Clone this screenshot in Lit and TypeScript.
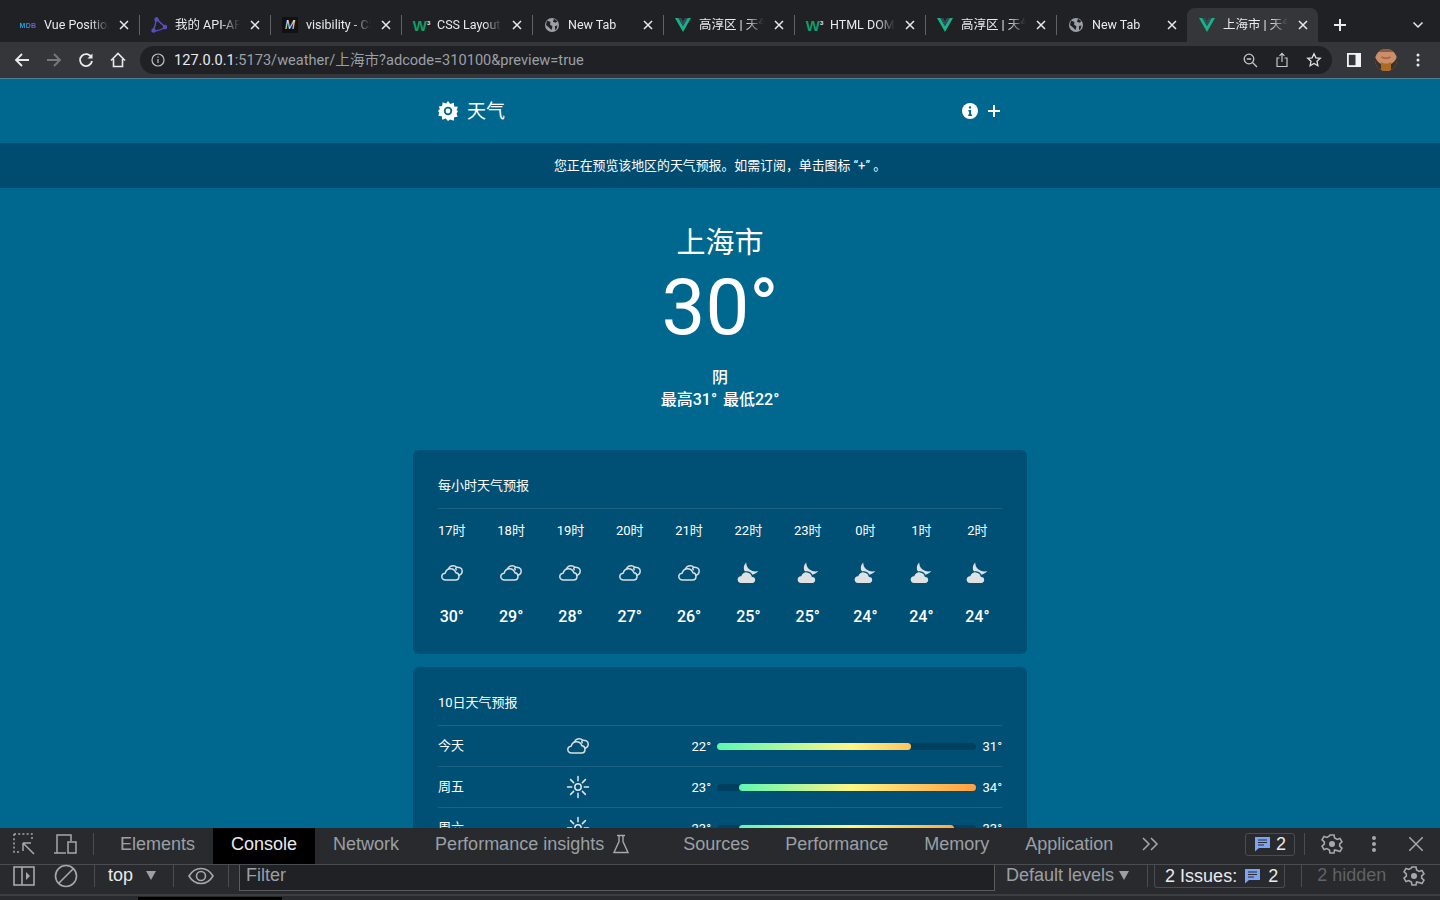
import { LitElement, html, css, svg } from 'lit';
import { customElement } from 'lit/decorators.js';

const SANS = css`Roboto, "Noto Sans CJK SC", sans-serif`;

// Weather icons
const cloudy = svg`<svg width="22" height="16" viewBox="0 0 22 16" fill="none" stroke="#dcdfe2" stroke-width="1.500" stroke-linejoin="round" stroke-linecap="round">
  <path d="M4.500 15C2.300 15 .8 13.500.8 11.700c0-1.900 1.400-3.300 3.300-3.500C5 5.300 7 3.600 9.400 3.700c2.600.1 4.900 1.700 5.400 4 1.900.1 3.200 1.600 3.200 3.500 0 2.100-1.400 3.800-3.500 3.800Z"/>
  <path d="M7.500 4.100C8.200 2 10.200.8 12.300.8c1.300 0 2.500.5 3.200 1.400 2.700-.3 5.700 1 5.700 3.800 0 2.100-1.200 3.700-3.300 4.300"/>
  <path d="M15.500 2.200c-.8.8-.9 1.800-.3 2.600"/>
</svg>`;
const moonCloud = svg`<svg width="22" height="22" viewBox="0 0 22 22" fill="#dfe1e3">
  <path d="M9.200.4C6.800 2.700 6 6.500 8 9.400c1.800 2.500 5.200 3.800 8.200 3 2.200-.6 4-1.800 5.100-3.300-3 .8-6.300.3-8.700-1.500C10.400 5.900 9.200 3.200 9.200.4Z"/>
  <path stroke="#005076" stroke-width="1.200" d="M4 21.500C1.500 21.500 0 19.800 0 17.600c0-2.300 1.700-3.900 3.800-3.900C5 11 7.500 9.500 10 9.800c2.700.3 4.800 2 5.300 4.500 2 .2 3.500 1.500 3.500 3.500 0 2-1.500 3.700-3.500 3.700Z"/>
</svg>`;
const sun = svg`<svg width="24" height="24" viewBox="0 0 24 24" fill="none" stroke="#e4e6e8" stroke-width="1.500" stroke-linecap="round">
  <circle cx="12" cy="12" r="3.200"/>
  <path d="M12 1.500v4.200M12 18.300v4.200M1.500 12h4.200M18.300 12h4.200M4.600 4.600l3 3M16.400 16.400l3 3M4.600 19.400l3-3M16.400 7.600l3-3"/>
</svg>`;

// Browser toolbar icons
const closeX = svg`<svg width="10" height="10" viewBox="0 0 10 10" stroke="#e8eaed" stroke-width="1.500"><path d="M1 1l8 8M9 1L1 9"/></svg>`;
const globe = svg`<svg width="16" height="16" viewBox="0 0 16 16"><circle cx="8" cy="8" r="7" fill="#9aa0a6"/><path d="M3 3.500 6.500 5 6 7.500 8.500 9.500 7.500 13 5 10.500 2 8ZM10 1.800l3.500 2.500-2 1.500-2.500-1ZM11 9l2.500-.5-1 3.500-1.500 1Z" fill="#202124"/></svg>`;
const vue = svg`<svg width="16" height="14" viewBox="0 0 16 14"><path d="M0 0h3.400L8 8 12.600 0H16L8 14Z" fill="#17b384"/><path d="M3.400 0h2.800L8 3.200 9.800 0h2.800L8 8Z" fill="#37495b"/></svg>`;
const hapi = svg`<svg width="16" height="16" viewBox="0 0 16 16" fill="none" stroke="#5b4fc7" stroke-width="1.400"><path d="M5.500 1.500C5 5 4 10 1.800 14.200 6 14 11 12.500 14.500 10 11 7.500 8 4.500 5.500 1.500Z"/><circle cx="5.500" cy="2.500" r="1.500"/><circle cx="14" cy="10" r="1.500"/><circle cx="2.500" cy="13.500" r="1.500"/></svg>`;

type Tab = { title: string; icon: unknown; active?: boolean };

const mdb = html`<span class="fav-mdb">MDB</span>`;
const mdn = html`<span class="fav-mdn">M</span>`;
const w3 = html`<span class="fav-w3">W<sup>3</sup></span>`;

const TABS: Tab[] = [
  { title: 'Vue Position', icon: mdb },
  { title: '我的 API-API', icon: hapi },
  { title: 'visibility - CSS', icon: mdn },
  { title: 'CSS Layout', icon: w3 },
  { title: 'New Tab', icon: globe },
  { title: '高淳区 | 天气', icon: vue },
  { title: 'HTML DOM', icon: w3 },
  { title: '高淳区 | 天气', icon: vue },
  { title: 'New Tab', icon: globe },
  { title: '上海市 | 天气', icon: vue, active: true },
];

@customElement('browser-chrome')
export class BrowserChrome extends LitElement {
  static styles = css`
    :host { display: block; font-family: Roboto, "Noto Sans CJK SC", sans-serif; }
    .strip { height: 42px; background: #202124; display: flex; align-items: flex-end; padding-left: 8px; box-sizing: border-box; }
    .tab { width: 131px; height: 34px; display: flex; align-items: center; padding-left: 12px; box-sizing: border-box; position: relative; color: #e8eaed; font-size: 12.500px; }
    .tab.sep::after { content: ''; position: absolute; right: -1px; top: 7px; height: 20px; width: 1px; background: #5f6368; }
    .tab.active { background: #35363a; border-radius: 8px 8px 0 0; }
    .fav { width: 16px; height: 16px; display: flex; align-items: center; justify-content: center; flex: none; margin-right: 8px; }
    .title { flex: 1; min-width: 0; height: 16px; line-height: 15px; white-space: nowrap; overflow: hidden; -webkit-mask-image: linear-gradient(90deg, #000 72%, transparent 100%); mask-image: linear-gradient(90deg, #000 72%, transparent 100%); }
    .close { width: 30px; flex: none; display: flex; justify-content: center; }
    .fav-mdb { font: bold 7px "Liberation Sans", sans-serif; letter-spacing: .3px; background: linear-gradient(90deg, #19b5e8, #3f7be0 60%, #7b4fd8); -webkit-background-clip: text; background-clip: text; color: transparent; }
    .fav-mdn { width: 16px; height: 16px; background: #111; color: #e8eaed; font: italic 12px/16px "Liberation Sans", sans-serif; text-align: center; }
    .fav-w3 { font: bold 15px "Liberation Sans", sans-serif; color: #0f9d68; letter-spacing: -1px; white-space: nowrap; }
    .fav-w3 sup { font-size: 6px; color: #e8eaed; vertical-align: 6px; line-height: 0; margin-left: 1px; }
    .plus { width: 44px; display: flex; justify-content: center; align-self: center; padding-top: 8px; }
    .chev { margin-left: auto; width: 44px; display: flex; justify-content: center; align-self: center; padding-top: 8px; }
    .bar { height: 36px; background: #35363a; display: flex; align-items: center; box-sizing: border-box; padding-left: 6px; }
    .btn { width: 32px; display: flex; justify-content: center; align-items: center; flex: none; }
    .omni { width: 1192px; height: 28px; margin-left: 6px; border-radius: 14px; background: #202124; display: flex; align-items: center; flex: none; font-size: 14.600px; color: #9aa0a6; }
    .omni .lock { width: 34px; display: flex; justify-content: center; flex: none; padding-left: 2px; box-sizing: border-box; }
    .host { color: #e8eaed; }
    .url { flex: 1; white-space: nowrap; line-height: 28px; height: 28px; padding-bottom: 2px; box-sizing: border-box; }
    .side { margin-left: 6px; display: flex; }
  `;

  render() {
    return html`
      <div class="strip">
        ${TABS.map((t, i) => html`
          <div class="tab ${t.active ? 'active' : ''} ${!t.active && i < TABS.length - 2 ? 'sep' : ''}">
            <span class="fav">${t.icon}</span>
            <span class="title">${t.title}</span>
            <span class="close">${closeX}</span>
          </div>`)}
        <div class="plus"><svg width="14" height="14" viewBox="0 0 14 14" stroke="#e8eaed" stroke-width="2"><path d="M7 1v12M1 7h12"/></svg></div>
        <div class="chev"><svg width="12" height="8" viewBox="0 0 12 8" fill="none" stroke="#e8eaed" stroke-width="1.500"><path d="M1.500 1.500 6 6l4.500-4.500"/></svg></div>
      </div>
      <div class="bar">
        <span class="btn"><svg width="16" height="16" viewBox="0 0 16 16" fill="none" stroke="#e8eaed" stroke-width="1.800"><path d="M15 8H2M8 2 2 8l6 6"/></svg></span>
        <span class="btn"><svg width="16" height="16" viewBox="0 0 16 16" fill="none" stroke="#77797d" stroke-width="1.800"><path d="M1 8h13M8 2l6 6-6 6"/></svg></span>
        <span class="btn"><svg width="16" height="16" viewBox="0 0 16 16" fill="none" stroke="#e8eaed" stroke-width="1.800"><path d="M13.500 5.500A6 6 0 1 0 14 9"/><path d="M14.500 1.500v5h-5" fill="#e8eaed" stroke="none"/></svg></span>
        <span class="btn"><svg width="16" height="16" viewBox="0 0 16 16" fill="none" stroke="#e8eaed" stroke-width="1.600"><path d="M1 8.500 8 1.500l7 7M3.500 7v7.500h9V7"/></svg></span>
        <div class="omni">
          <span class="lock"><svg width="14" height="14" viewBox="0 0 14 14" fill="none" stroke="#bdc1c6" stroke-width="1.200"><circle cx="7" cy="7" r="6"/><path d="M7 6v4M7 3.500v1.300"/></svg></span>
          <span class="url"><span class="host">127.0.0.1</span>:5173/weather/上海市?adcode=310100&amp;preview=true</span>
          <span class="btn"><svg width="15" height="15" viewBox="0 0 15 15" fill="none" stroke="#c4c7ca" stroke-width="1.300"><circle cx="6" cy="6" r="4.800"/><path d="M3.800 6h4.400M9.500 9.500 14 14"/></svg></span>
          <span class="btn"><svg width="14" height="16" viewBox="0 0 14 16" fill="none" stroke="#c4c7ca" stroke-width="1.200"><path d="M4.500 6H2v8.500h10V6H9.500M7 10V1.500M4.500 3.800 7 1.300l2.500 2.500"/></svg></span>
          <span class="btn"><svg width="16" height="16" viewBox="0 0 16 16" fill="none" stroke="#dfe1e5" stroke-width="1.300"><path d="m8 1.800 1.900 4 4.400.5-3.300 3 .9 4.400L8 11.500l-3.900 2.200.9-4.400-3.300-3 4.400-.5Z"/></svg></span>
          <span style="width:2px"></span>
        </div>
        <div class="side">
          <span class="btn"><svg width="14" height="14" viewBox="0 0 14 14"><rect width="14" height="14" fill="#f1f3f4"/><rect x="1.800" y="1.800" width="6.700" height="10.400" fill="#35363a"/></svg></span>
          <span class="btn"><svg width="22" height="22" viewBox="0 0 22 22">
            <defs><clipPath id="av"><circle cx="11" cy="11" r="11"/></clipPath></defs>
            <g clip-path="url(#av)">
              <rect width="22" height="22" fill="#c98f68"/>
              <rect width="22" height="3" fill="#8a5a3a"/>
              <path d="M0 8c2 4 4 6 6 7v7H0ZM22 8c-2 4-4 6-6 7v7h6Z" fill="#3b3128"/>
              <path d="M6 13c3 2 7 2 10 0v9H6Z" fill="#ad6a26"/>
              <path d="M6.500 8c2.500 1.500 6.500 1.500 9 0" stroke="#b9563f" stroke-width="1.500" fill="none"/>
            </g>
          </svg></span>
          <span class="btn"><svg width="4" height="14" viewBox="0 0 4 14" fill="#e8eaed"><circle cx="2" cy="2" r="1.500"/><circle cx="2" cy="7" r="1.500"/><circle cx="2" cy="12" r="1.500"/></svg></span>
        </div>
      </div>
    `;
  }
}

const HOURS = [
  { t: '17时', i: cloudy, v: 30 }, { t: '18时', i: cloudy, v: 29 }, { t: '19时', i: cloudy, v: 28 },
  { t: '20时', i: cloudy, v: 27 }, { t: '21时', i: cloudy, v: 26 }, { t: '22时', i: moonCloud, v: 25 },
  { t: '23时', i: moonCloud, v: 25 }, { t: '0时', i: moonCloud, v: 24 }, { t: '1时', i: moonCloud, v: 24 },
  { t: '2时', i: moonCloud, v: 24 },
];

const DAYS = [
  { d: '今天', i: cloudy, lo: 22, hi: 31, end: '#ffc25c' },
  { d: '周五', i: sun, lo: 23, hi: 34, end: '#ff9f40' },
  { d: '周六', i: sun, lo: 23, hi: 33, end: '#ffa746' },
];

const MIN = 22;
const MAX = 34;
const YELLOW_AT = 28.2;

@customElement('weather-page')
export class WeatherPage extends LitElement {
  static styles = css`
    :host { display: block; height: 100%; overflow: hidden; background: #00688f; color: #fff; font-family: ${SANS}; border-top: 1px solid #4b7f93; box-sizing: border-box; }
    .top { height: 64px; background: #00688f; display: flex; justify-content: center; }
    .top-in { width: 564px; display: flex; align-items: center; }
    .logo { font-size: 19px; margin-left: 9px; line-height: 1; }
    .spacer { flex: 1; }
    .plus { margin-left: 9px; margin-right: 1px; display: flex; }
    .notice { height: 45px; background: #004c70; display: flex; align-items: center; justify-content: center; font-size: 12.900px; padding-bottom: 2px; box-sizing: border-box; }
    .now { display: flex; flex-direction: column; align-items: center; padding-top: 35px; }
    .city { font-size: 29px; line-height: 40px; }
    .temp { font-size: 78px; line-height: 88px; margin-top: 1px; }
    .cond { font-size: 16px; line-height: 22px; margin-top: 15px; font-weight: 500; }
    .range { font-size: 16px; line-height: 22px; font-weight: 500; word-spacing: 2px; }
    .cards { width: 614px; margin: 39px auto 0; display: flex; flex-direction: column; gap: 13px; }
    .card { background: #005076; border-radius: 6px; padding: 26px 25px 0; }
    .card-title { font-size: 13px; line-height: 20px; padding-bottom: 12px; border-bottom: 1px solid #1d6283; }
    .hours { display: flex; gap: 31.700px; height: 145px; }
    .hour { display: flex; flex-direction: column; align-items: center; min-width: 24px; }
    .h-t { font-size: 13px; line-height: 20px; margin-top: 12px; }
    .h-i { margin-top: 21px; height: 22px; display: flex; align-items: center; }
    .h-v { font-size: 16px; font-weight: 500; line-height: 20px; margin-top: 23px; }
    .day { height: 40px; display: flex; align-items: center; font-size: 13px; border-bottom: 1px solid #1d6283; }
    .d-name { width: 128px; padding-bottom: 3px; box-sizing: border-box; }
    .d-icon { width: 24px; height: 24px; display: flex; align-items: center; justify-content: center; }
    .d-lo { margin-left: 100px; width: 21px; text-align: right; white-space: nowrap; }
    .track { width: 259px; height: 7px; border-radius: 4px; background: #003f5e; margin: 0 6px; flex: none; display: flex; }
    .fill { height: 7px; border-radius: 4px; }
    .d-hi { flex: 1; text-align: right; }
  `;

  render() {
    return html`
      <div class="top"><div class="top-in">
        <svg width="20" height="20" viewBox="0 0 20 20"><path fill-rule="evenodd" fill="#fff" d="M10 0l2.300 3 3.500-1.300.4 3.700 3.700.4L18.600 9.300 20 10l-1.400 2.800 1 2.900-3.400.5-.5 3.500-3.500-1.200L10 20l-2.300-2.500-3.500 1.200-.4-3.500-3.500-.5 1-2.900L0 10l1.800-2-1-2.600 3.400-.4.400-3.700 3.500 1.300ZM10 5.800a4.200 4.200 0 1 0 0 8.400 4.200 4.200 0 0 0 0-8.400Z"/><circle cx="10" cy="10" r="2.400" fill="#fff"/></svg>
        <span class="logo">天气</span>
        <span class="spacer"></span>
        <svg width="16" height="16" viewBox="0 0 16 16"><circle cx="8" cy="8" r="8" fill="#fff"/><path d="M8 3.200a1.200 1.200 0 1 1 0 2.400 1.200 1.200 0 0 1 0-2.400ZM6.400 7h2.700v4.600h.9V13H6.200v-1.400h.9V8.400h-.7Z" fill="#00688f"/></svg>
        <span class="plus"><svg width="14" height="14" viewBox="0 0 14 14" stroke="#fff" stroke-width="2"><path d="M7 1v12M1 7h12"/></svg></span>
      </div></div>
      <div class="notice">您正在预览该地区的天气预报。如需订阅，单击图标 “+” 。</div>
      <div class="now">
        <div class="city">上海市</div>
        <div class="temp">30°</div>
        <div class="cond">阴</div>
        <div class="range">最高31° 最低22°</div>
      </div>
      <div class="cards">
        <section class="card">
          <div class="card-title">每小时天气预报</div>
          <div class="hours">
            ${HOURS.map(h => html`<div class="hour"><span class="h-t">${h.t}</span><span class="h-i">${h.i}</span><span class="h-v">${h.v}°</span></div>`)}
          </div>
        </section>
        <section class="card">
          <div class="card-title">10日天气预报</div>
          ${DAYS.map(d => {
            const span = MAX - MIN;
            const mid = ((YELLOW_AT - d.lo) / (d.hi - d.lo)) * 100;
            return html`<div class="day">
              <span class="d-name">${d.d}</span>
              <span class="d-icon">${d.i}</span>
              <span class="d-lo">${d.lo}°</span>
              <span class="track"><span class="fill" style="margin-left:${((d.lo - MIN) / span) * 100}%;width:${((d.hi - d.lo) / span) * 100}%;background:linear-gradient(90deg,#5ff7b2 0%,#fff684 ${mid}%,${d.end} 100%)"></span></span>
              <span class="d-hi">${d.hi}°</span>
            </div>`;
          })}
        </section>
      </div>
    `;
  }
}

const chatIcon = svg`<svg width="15" height="16" viewBox="0 0 15 16"><path d="M0 1h15v11H4l-4 3.500Z" fill="#7ba4f5"/><path d="M3 4h9M3 6.500h9M3 9h6" stroke="#292a2d" stroke-width="1.200"/></svg>`;
const gearIcon = svg`<svg width="22" height="22" viewBox="0 0 22 22" fill="none" stroke="#a6a8ab" stroke-width="1.600"><path d="M9 2h4l.6 3 2.500 1.400 2.900-1 2 3.400-2.300 2v2.400l2.300 2-2 3.400-2.900-1L13.600 17 13 20H9l-.6-3-2.500-1.400-2.900 1-2-3.400 2.300-2V8.800L1 6.800l2-3.400 2.900 1L8.400 3Z"/><circle cx="11" cy="11" r="3" fill="#a6a8ab" stroke="none"/></svg>`;

@customElement('devtools-panel')
export class DevtoolsPanel extends LitElement {
  static styles = css`
    :host { display: block; height: 72px; background: #292a2d; font-family: "Liberation Sans", sans-serif; color: #9aa0a6; font-size: 18px; overflow: hidden; box-sizing: border-box; }
    .row1 { height: 36px; display: flex; align-items: center; border-bottom: 1px solid #494c50; box-sizing: content-box; }
    .row1 > .ic, .row1 > .vsep, .row1 > .badge { margin-bottom: 4px; }
    .ic { display: flex; flex: none; }
    .vsep { width: 1px; height: 22px; background: #494c50; flex: none; }
    .tabs { display: flex; height: 36px; }
    .tab { padding: 0 18px 4px; white-space: nowrap; display: flex; gap: 8px; align-items: center; box-sizing: border-box; }
    .tab.on { background: #000; color: #e8eaed; }
    .tab.lab { margin-right: 17px; }
    .badge { height: 23px; border: 1px solid #494c50; border-radius: 3px; display: flex; align-items: center; gap: 6px; padding: 0 8px 0 9px; color: #e8eaed; box-sizing: border-box; }
    .row2 { height: 31px; display: flex; align-items: center; border-bottom: 2px solid #3c3e42; padding-bottom: 8px; box-sizing: border-box; }
    .top { color: #e8eaed; margin-left: 13px; }
    .tri { width: 0; height: 0; border: 5.500px solid transparent; border-top: 9px solid #9aa0a6; border-bottom: 0; flex: none; }
    .filter { width: 756px; height: 26px; align-self: flex-start; box-sizing: border-box; background: #202124; border: 1px solid #5a5c60; border-top: 0; padding-left: 6px; line-height: 21px; margin-left: 10px; }
    .levels { margin-left: 11px; white-space: nowrap; }
    .issues { height: 23px; align-self: flex-start; margin-left: 6px; border: 1px solid #494c50; border-top: 0; border-radius: 0 0 3px 3px; display: flex; align-items: center; gap: 8px; padding: 0 6px 0 10px; color: #e8eaed; box-sizing: border-box; white-space: nowrap; }
    .hid { color: #5f6368; margin-left: 15px; white-space: nowrap; }
    .foot { height: 3px; width: 144px; background: #000; margin-left: 138px; margin-top: 1px; }
  `;

  render() {
    return html`
      <div class="row1">
        <span class="ic" style="margin-left:13px"><svg width="22" height="22" viewBox="0 0 22 22" fill="none" stroke="#a6a8ab" stroke-width="1.500"><path d="M1 1h18v6M1 1v18h6" stroke-dasharray="2 2.200"/><path d="M10 10h8M10 10v8M10 10l11 11"/></svg></span>
        <span class="ic" style="margin-left:18px"><svg width="24" height="22" viewBox="0 0 24 22" fill="none" stroke="#a6a8ab" stroke-width="1.500"><path d="M1 20h12M4 20V2h14v6"/><rect x="15" y="9" width="8" height="11"/></svg></span>
        <span class="vsep" style="margin-left:16px"></span>
        <div class="tabs" style="margin-left:8px">
          <span class="tab">Elements</span>
          <span class="tab on">Console</span>
          <span class="tab">Network</span>
          <span class="tab lab">Performance insights <svg width="18" height="20" viewBox="0 0 18 20" fill="none" stroke="#a6a8ab" stroke-width="1.400"><path d="M5 1.500h8M7 1.500v6L2 18.500h14L11 7.500v-6"/></svg></span>
          <span class="tab">Sources</span>
          <span class="tab">Performance</span>
          <span class="tab">Memory</span>
          <span class="tab">Application</span>
        </div>
        <span class="ic" style="margin-left:11px"><svg width="18" height="14" viewBox="0 0 18 14" fill="none" stroke="#a6a8ab" stroke-width="1.500"><path d="M1 1l6 6-6 6M9 1l6 6-6 6"/></svg></span>
        <span style="flex:1"></span>
        <span class="badge">${chatIcon}2</span>
        <span class="vsep" style="margin-left:9px"></span>
        <span class="ic" style="margin-left:16px">${gearIcon}</span>
        <span class="ic" style="margin-left:29px"><svg width="4" height="18" viewBox="0 0 4 18" fill="#a6a8ab"><circle cx="2" cy="3" r="2"/><circle cx="2" cy="9" r="2"/><circle cx="2" cy="15" r="2"/></svg></span>
        <span class="ic" style="margin-left:33px;margin-right:17px"><svg width="14" height="14" viewBox="0 0 14 14" stroke="#a6a8ab" stroke-width="1.500"><path d="M0 0l14 14M14 0 0 14"/></svg></span>
      </div>
      <div class="row2">
        <span class="ic" style="margin-left:13px"><svg width="22" height="20" viewBox="0 0 22 20" fill="none" stroke="#a6a8ab" stroke-width="1.600"><rect x="1" y="1" width="20" height="18"/><path d="M9 1v18"/><path d="M13 6l4 4-4 4Z" fill="#a6a8ab" stroke="none"/></svg></span>
        <span class="ic" style="margin-left:19px"><svg width="24" height="24" viewBox="0 0 24 24" fill="none" stroke="#a6a8ab" stroke-width="1.600"><circle cx="12" cy="12" r="10.500"/><path d="M5 19 19 5"/></svg></span>
        <span class="vsep" style="margin-left:16px"></span>
        <span class="top">top</span>
        <span class="tri" style="margin-left:13px"></span>
        <span class="vsep" style="margin-left:17px"></span>
        <span class="ic" style="margin-left:14px"><svg width="26" height="18" viewBox="0 0 26 18" fill="none" stroke="#a6a8ab" stroke-width="1.600"><path d="M1 9c3-5 7-7.500 12-7.500S22 4 25 9c-3 5-7 7.500-12 7.500S4 14 1 9Z"/><circle cx="13" cy="9" r="4.500"/></svg></span>
        <span class="vsep" style="margin-left:14px"></span>
        <span class="filter">Filter</span>
        <span class="levels">Default levels</span>
        <span class="tri" style="margin-left:5px"></span>
        <span class="vsep" style="margin-left:18px"></span>
        <span class="issues">2 Issues: ${chatIcon} 2</span>
        <span class="vsep" style="margin-left:16px"></span>
        <span class="hid">2 hidden</span>
        <span class="ic" style="margin-left:17px">${gearIcon}</span>
      </div>
      <div class="foot"></div>
    `;
  }
}

@customElement('app-root')
export class AppRoot extends LitElement {
  static styles = css`
    :host { display: flex; flex-direction: column; height: 900px; overflow: hidden; }
    weather-page { flex: 1; min-height: 0; }
    devtools-panel { flex: none; }
  `;

  render() {
    return html`<browser-chrome></browser-chrome><weather-page></weather-page><devtools-panel></devtools-panel>`;
  }
}
